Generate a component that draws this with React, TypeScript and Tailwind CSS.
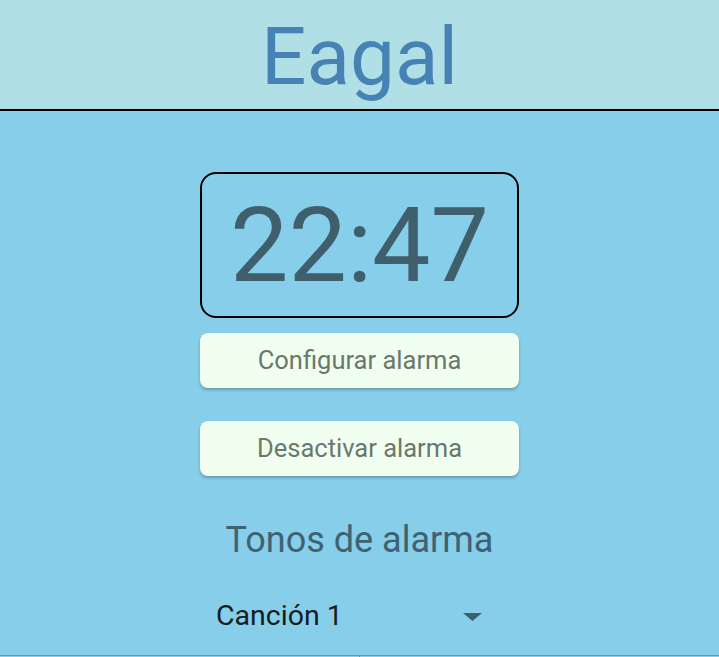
export default function App() {
  return (
    <div className="h-[657px] w-[719px] overflow-hidden bg-[#87ceeb]" style={{ fontFamily: "Roboto, 'Liberation Sans', sans-serif" }}>
      <header className="h-[111px] border-b-2 border-black bg-[#b0dfe5] flex justify-center">
        <h1 className="text-[80px] leading-none text-[#4682b4] mt-[17px]">Eagal</h1>
      </header>

      <main className="flex flex-col items-center pt-[61px]">
        <div className="w-[319px] h-[146px] rounded-[16px] border-2 border-black flex items-center justify-center">
          <span className="text-[104px] leading-none text-[#3f5f6d] mt-[2px]">22:47</span>
        </div>

        <button className="mt-[15px] w-[319px] h-[55px] rounded-[8px] bg-[#f0fff0] shadow-[0_2px_3px_rgba(0,0,0,0.25)] text-[25.5px] text-[#6b786b]">
          Configurar alarma
        </button>
        <button className="mt-[33px] w-[319px] h-[55px] rounded-[8px] bg-[#f0fff0] shadow-[0_2px_3px_rgba(0,0,0,0.25)] text-[25.5px] text-[#6b786b]">
          Desactivar alarma
        </button>

        <h2 className="mt-[46px] text-[36px] leading-none text-[#3f6271]">Tonos de alarma</h2>

        <div className="mt-[43px] h-[30px] w-[319px] flex items-center justify-between pl-[16px] pr-[37px]">
          <span className="text-[28.5px] leading-none text-[#161c1f]">Canción 1</span>
          <svg width="19" height="8" viewBox="0 0 19 8" className="mt-[2px]">
            <polygon points="0,0 19,0 9.5,8" fill="#3f5f6d" />
          </svg>
        </div>
      </main>

      <div className="mt-[24px] h-px w-full bg-[#7c8e97] relative">
        <div className="absolute left-[359px] top-px w-px h-[2px] bg-[#7c8e97]" />
      </div>
    </div>
  );
}
